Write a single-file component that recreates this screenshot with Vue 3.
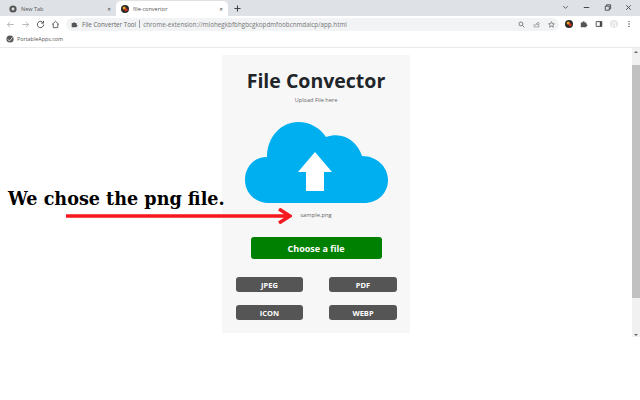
<script setup>
const formats = ["JPEG", "PDF", "ICON", "WEBP"];
</script>

<template>
  <div class="window">
    <div class="tabstrip">
      <div class="tab">
        <svg class="favicon" viewBox="0 0 10 10"><circle cx="5" cy="5" r="4.5" fill="#555" /><circle cx="5" cy="5" r="1.8" fill="#dee1e6" /></svg>
        <span class="tab-title">New Tab</span>
        <span class="tab-close">✕</span>
      </div>
      <div class="tab active">
        <svg class="favicon" viewBox="0 0 10 10"><circle cx="5" cy="5" r="5" fill="#2a2a2a" /><circle cx="4" cy="3.800" r="1.900" fill="#f5a623" /><circle cx="6.300" cy="6" r="1.900" fill="#d8321e" /></svg>
        <span class="tab-title">file-convertor</span>
        <span class="tab-close">✕</span>
      </div>
      <svg class="newtab" viewBox="0 0 8 8"><path d="M4 .5v7M.5 4h7" stroke="#444" stroke-width="1.2" /></svg>
      <div class="win-controls">
        <svg viewBox="0 0 10 10"><path d="M2.500 3.500 5 6l2.500-2.500" fill="none" stroke="#555" /></svg>
        <svg viewBox="0 0 10 10"><path d="M2 5h6" stroke="#444" stroke-width="1.100" /></svg>
        <svg viewBox="0 0 10 10"><path d="M2.500 3.500h4.500v4.500h-4.500zM4 3.500V2h4.500v4.500H7" fill="none" stroke="#444" /></svg>
        <svg viewBox="0 0 10 10"><path d="m2.500 2.500 5 5m0-5-5 5" stroke="#444" /></svg>
      </div>
    </div>

    <div class="toolbar">
      <div class="nav">
        <svg viewBox="0 0 10 10"><path d="M8.500 5h-7M4.500 2 1.500 5l3 3" fill="none" stroke="#aeb1b5" /></svg>
        <svg viewBox="0 0 10 10"><path d="M1.500 5h7M5.500 2l3 3-3 3" fill="none" stroke="#aeb1b5" /></svg>
        <svg viewBox="0 0 10 10"><path d="M8 3.200A3.500 3.500 0 1 0 8.500 5M8.300 1v2.500H5.800" fill="none" stroke="#555" stroke-width="1.100" /></svg>
        <svg viewBox="0 0 10 10"><path d="M1.200 5 5 1.500 8.800 5M2.500 4.200V8.500h5V4.200" fill="none" stroke="#555" /></svg>
      </div>
      <div class="omnibox">
        <svg class="omni-ext" viewBox="0 0 10 10"><path d="M1 3h2.200a1.300 1.300 0 0 1 2.600 0H8v2.200a1.300 1.300 0 0 1 0 2.600V9H1z" fill="#555" /></svg>
        <span class="site">File Converter Tool</span>
        <span class="divider"></span>
        <span class="url">chrome-extension://mlohegkbfbhgbcgkopdmfoobcnmdaicp/app.html</span>
        <div class="omni-actions">
          <svg viewBox="0 0 10 10"><circle cx="4.200" cy="4.200" r="2.800" fill="none" stroke="#555" /><path d="m6.300 6.300 2.700 2.700" stroke="#555" /></svg>
          <svg viewBox="0 0 10 10"><path d="M1.500 4.500v4h7v-3M3.500 6c.3-2 1.800-3 3.500-3V1.500L9.200 3.800 7 6V4.500C5.500 4.500 4.300 5 3.500 6z" fill="none" stroke="#777" stroke-width=".8" /></svg>
          <svg viewBox="0 0 10 10"><path d="m5 1 1.200 2.700 2.900.3-2.200 1.900.7 2.900L5 7.300 2.400 8.800l.7-2.900L.9 4l2.900-.3z" fill="none" stroke="#555" stroke-width=".9" /></svg>
        </div>
      </div>
      <div class="tool-actions">
        <svg viewBox="0 0 10 10"><circle cx="5" cy="5" r="5" fill="#2a2a2a" /><circle cx="4" cy="3.800" r="1.900" fill="#f5a623" /><circle cx="6.300" cy="6" r="1.900" fill="#d8321e" /></svg>
        <svg viewBox="0 0 10 10"><path d="M1 3h2.200a1.300 1.300 0 0 1 2.600 0H8v2.200a1.300 1.300 0 0 1 0 2.600V9H1z" fill="#555" /></svg>
        <svg viewBox="0 0 10 10"><path d="M1.500 2h7v6h-7z" fill="none" stroke="#444" stroke-width="1.100" /><path d="M6 2h2.500v6H6z" fill="#444" /></svg>
        <svg viewBox="0 0 10 10"><circle cx="5" cy="5" r="5" fill="#e3e5e8" /><path d="M3 9V5a2 2 0 0 1 4 0v4" fill="none" stroke="#fff" stroke-width="1.200" /></svg>
        <svg viewBox="0 0 10 10"><circle cx="5" cy="2" r=".9" fill="#555" /><circle cx="5" cy="5" r=".9" fill="#555" /><circle cx="5" cy="8" r=".9" fill="#555" /></svg>
      </div>
    </div>

    <div class="bookmarks">
      <svg class="favicon" viewBox="0 0 10 10"><circle cx="5" cy="5" r="4.500" fill="#555" /><path d="M2 5.500 4.500 7.500 8 3" fill="none" stroke="#fff" /></svg>
      <span>PortableApps.com</span>
    </div>

    <main class="page">
      <section class="card">
        <h1>File Convector</h1>
        <p class="subtitle">Upload File here</p>
        <svg class="cloud" viewBox="0 0 143 81">
          <path d="M24 81C10 81 0 71 0 58 0 45 9 35 22 35 22 14 37 0 53 0 65 0 75 6 81 15 97 9 112 18 117 34 132 34 143 45 143 58 143 71 133 81 119 81Z" fill="#00aff0" />
          <path d="M70 30 87 50H79V69H61V50H53Z" fill="#fff" />
        </svg>
        <p class="filename">sample.png</p>
        <button class="choose">Choose a file</button>
        <div class="formats">
          <button v-for="f in formats" :key="f" class="format">{{ f }}</button>
        </div>
      </section>
      <div class="scrollbar">
        <span class="arrow up"></span>
        <span class="thumb"></span>
        <span class="arrow down"></span>
      </div>

      <p class="note">We chose the png file.</p>
      <svg class="pointer" viewBox="0 0 226 16">
        <path d="M0 8H223M213 1 224 8 213 15" fill="none" stroke="#f5191f" stroke-width="3.500" />
      </svg>
    </main>
  </div>
</template>

<style>
html,
body {
  margin: 0;
  background: #fff;
  overflow: hidden;
}
</style>

<style scoped>
.window {
  width: 640px;
  height: 400px;
  display: flex;
  flex-direction: column;
  font-family: "Open Sans", sans-serif;
  color: #444;
}
svg {
  display: block;
  flex: none;
}
.tabstrip {
  height: 16px;
  background: #dee1e6;
  display: flex;
  align-items: flex-end;
  padding-left: 4px;
}
.tab {
  width: 112px;
  height: 15px;
  display: flex;
  align-items: center;
  padding: 0 5px;
  box-sizing: border-box;
  gap: 4px;
}
.tab.active {
  background: #fff;
  border-radius: 5px 5px 0 0;
}
.favicon {
  width: 8px;
  height: 8px;
}
.tab-title {
  flex: 1;
  font-size: 5.500px;
  color: #555;
}
.tab-close {
  font-size: 5px;
  color: #444;
}
.newtab {
  width: 7px;
  height: 7px;
  margin: 0 auto 4px 6px;
}
.win-controls {
  display: flex;
  gap: 12px;
  padding-right: 7px;
  margin-bottom: 4px;
}
.win-controls svg {
  width: 9px;
  height: 9px;
}
.toolbar {
  height: 16px;
  display: flex;
  align-items: center;
  background: #fff;
}
.nav {
  display: flex;
  gap: 6px;
  padding-left: 6px;
  width: 66px;
  box-sizing: border-box;
}
.nav svg {
  width: 9px;
  height: 9px;
}
.omnibox {
  flex: 1;
  height: 13px;
  margin-right: 6px;
  background: #f1f3f4;
  border-radius: 7px;
  display: flex;
  align-items: center;
  padding: 0 4px 0 5px;
  box-sizing: border-box;
  font-size: 6.300px;
  white-space: nowrap;
}
.omni-ext {
  width: 7px;
  height: 7px;
  margin-right: 4px;
}
.site {
  color: #666;
  font-size: 6.200px;
}
.divider {
  width: 1px;
  height: 8px;
  background: #9aa0a6;
  margin: 0 3px;
}
.url {
  color: #777;
}
.omni-actions {
  display: flex;
  gap: 8px;
  margin-left: auto;
}
.omni-actions svg {
  width: 7px;
  height: 7px;
}
.tool-actions {
  display: flex;
  align-items: center;
  gap: 7px;
  width: 75px;
}
.tool-actions svg {
  width: 8px;
  height: 8px;
}
.bookmarks {
  height: 16px;
  display: flex;
  align-items: center;
  gap: 3px;
  padding: 0 0 1px 6px;
  box-sizing: border-box;
  font-size: 5.400px;
  color: #555;
  background: #fff;
  border-bottom: 1px solid #e8eaed;
}
.page {
  position: relative;
  flex: 1;
  display: flex;
  justify-content: center;
  align-items: flex-start;
  padding-top: 7px;
}
.card {
  width: 188px;
  height: 278px;
  margin-right: 8px;
  background: #f7f7f7;
  display: flex;
  flex-direction: column;
  align-items: center;
  padding-top: 12px;
  box-sizing: border-box;
}
h1 {
  margin: 0;
  font-size: 19.500px;
  line-height: 28px;
  font-weight: 700;
  color: #212529;
}
.subtitle {
  margin: 1px 0 0;
  font-size: 5.600px;
  line-height: 9px;
  color: #666;
}
.cloud {
  width: 143px;
  height: 81px;
  margin-top: 17px;
}
.filename {
  margin: 7px 0 0;
  font-size: 5.800px;
  line-height: 10px;
  color: #666;
}
.choose {
  width: 131px;
  height: 22px;
  margin-top: 17px;
  border: none;
  border-radius: 3px;
  background: #008000;
  color: #fff;
  font-family: inherit;
  font-size: 9px;
  font-weight: 700;
  padding: 0;
}
.formats {
  display: grid;
  grid-template-columns: 67px 68px;
  column-gap: 26px;
  row-gap: 13px;
  margin: 18px 0 0 1px;
}
.format {
  height: 15px;
  border: none;
  border-radius: 3px;
  background: #555;
  color: #fff;
  font-family: inherit;
  font-size: 7.500px;
  font-weight: 700;
  padding: 0;
}
.scrollbar {
  position: absolute;
  right: 0;
  top: 0;
  width: 8px;
  height: 289px;
  background: #f1f1f1;
  display: flex;
  flex-direction: column;
  align-items: center;
}
.thumb {
  width: 100%;
  height: 233px;
  margin-top: 12px;
  background: #c1c1c1;
}
.arrow {
  width: 0;
  height: 0;
  border-left: 2px solid transparent;
  border-right: 2px solid transparent;
}
.arrow.up {
  margin-top: 3px;
  border-bottom: 2px solid #666;
}
.arrow.down {
  margin-top: auto;
  margin-bottom: 1px;
  border-top: 2px solid #666;
}
.note {
  position: absolute;
  left: 8px;
  top: 139px;
  margin: 0;
  font-family: "DejaVu Serif", serif;
  font-size: 17.600px;
  line-height: 24px;
  font-weight: 700;
  color: #000;
  white-space: nowrap;
}
.pointer {
  position: absolute;
  left: 66px;
  top: 160px;
  width: 226px;
  height: 16px;
}
</style>
